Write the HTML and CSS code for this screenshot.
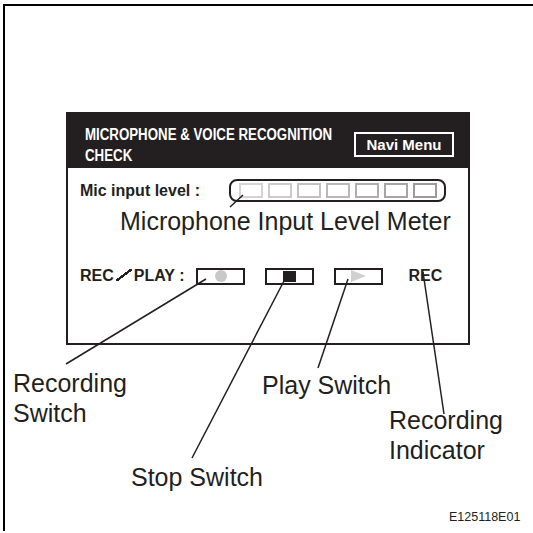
FILE: index.html
```
<!DOCTYPE html>
<html>
<head>
    <title>Microphone &amp; Voice Recognition Check</title>
    <link rel="stylesheet" href="styles.css">
</head>
<body>
    <div class="sheet">
        <div class="screen">
            <div class="screen-head">
                <div class="title">MICROPHONE &amp; VOICE RECOGNITION<br>CHECK</div>
                <div class="navi">Navi Menu</div>
            </div>

            <div class="mic-row">
                <span class="ui-label">Mic input level :</span>
                <div class="meter">
                    <span></span><span></span><span></span><span></span><span></span><span></span><span></span>
                </div>
            </div>
            <div class="meter-caption">Microphone Input Level Meter</div>

            <div class="rec-row">
                <span class="ui-label">REC<span class="slash"></span>PLAY :</span>
                <div class="switch first"><i class="dot"></i></div>
                <div class="switch"><i class="stop"></i></div>
                <div class="switch"><i class="play"></i></div>
                <span class="ui-label rec">REC</span>
            </div>
        </div>
    </div>

    <!-- callout labels -->
    <div class="callout rec-switch">Recording<br>Switch</div>
    <div class="callout play-switch">Play Switch</div>
    <div class="callout rec-indicator">Recording<br>Indicator</div>
    <div class="callout stop-switch">Stop Switch</div>
    <div class="fig-code">E125118E01</div>

    <!-- leader lines -->
    <svg class="leaders" width="533" height="533" viewBox="0 0 533 533">
        <line x1="243" y1="195" x2="230" y2="207"/>
        <line x1="206" y1="279" x2="66" y2="364"/>
        <line x1="285" y1="279" x2="192" y2="458"/>
        <line x1="348" y1="279" x2="318" y2="368"/>
        <line x1="423" y1="272" x2="444" y2="414"/>
    </svg>
</body>
</html>
```

FILE: styles.css
```
body {
    margin: 0;
    width: 533px;
    height: 533px;
    position: relative;
    overflow: hidden;
    background-color: #fff;
    color: #231f20;
    font-family: "Liberation Sans", Arial, sans-serif;
}

.sheet {
    margin: 4px 0 0 3px;
    height: 527px;
    border-left: 2px solid #000;
    border-top: 2px solid #000;
    padding: 106px 0 0 61px;
    box-sizing: border-box;
}

.screen {
    width: 404px;
    height: 233px;
    border: 2px solid #231f20;
    box-sizing: border-box;
}

.screen-head {
    height: 54px;
    background-color: #231f20;
    display: flex;
    justify-content: space-between;
    align-items: flex-start;
    padding: 10px 14px 0 17px;
    box-sizing: border-box;
}

/* condensed look: no narrow face installed, so squeeze it */
.title {
    width: 250px;
    color: #fff;
    font-weight: bold;
    font-size: 16px;
    line-height: 21px;
    white-space: nowrap;
    transform: scaleX(0.83);
    transform-origin: left top;
}

.navi {
    margin-top: 8px;
    width: 100px;
    height: 25px;
    border: 2px solid #fff;
    box-sizing: border-box;
    color: #fff;
    font-weight: bold;
    font-size: 15px;
    line-height: 21px;
    text-align: center;
}

.ui-label {
    font-weight: bold;
    font-size: 16px;
}

.mic-row {
    display: flex;
    align-items: center;
    margin-top: 11px;
    padding-left: 12px;
}

.meter {
    margin-left: 29px;
    width: 217px;
    height: 23px;
    border: 2px solid #231f20;
    border-radius: 8px;
    box-sizing: border-box;
    display: flex;
    align-items: center;
    gap: 5px;
    padding-left: 8px;
}

.meter span {
    width: 24px;
    height: 15px;
    border: 2px solid #d4d4d4;
    box-sizing: border-box;
}

.meter span:nth-child(2) { border-color: #cbcbcb; }
.meter span:nth-child(3) { border-color: #c2c2c2; }
.meter span:nth-child(4) { border-color: #b8b8b8; }
.meter span:nth-child(5) { border-color: #afafaf; }
.meter span:nth-child(6) { border-color: #a6a6a6; }
.meter span:nth-child(7) { border-color: #9c9c9c; }

.meter-caption {
    margin-top: 4px;
    padding-left: 52px;
    font-size: 25px;
    line-height: 30px;
}

.rec-row {
    display: flex;
    align-items: center;
    margin-top: 31px;
    padding-left: 12px;
}

.slash {
    display: inline-block;
    width: 16px;
    height: 12px;
    margin: 0 2px;
    background: linear-gradient(to bottom right, transparent 44%, #231f20 44%, #231f20 56%, transparent 56%);
}

.switch {
    width: 49px;
    height: 17px;
    margin-left: 20px;
    border: 2px solid #231f20;
    box-sizing: border-box;
    display: flex;
    align-items: center;
    justify-content: center;
}

.switch.first {
    margin-left: 12px;
}

.dot {
    width: 12px;
    height: 12px;
    border-radius: 50%;
    background-color: #c8c8c8;
}

.stop {
    width: 13px;
    height: 11px;
    background-color: #231f20;
}

.play {
    width: 0;
    height: 0;
    border-top: 6px solid transparent;
    border-bottom: 6px solid transparent;
    border-left: 15px solid #d0d0d0;
}

.ui-label.rec {
    margin-left: 25px;
}

.callout {
    position: absolute;
    font-size: 25px;
    line-height: 30px;
}

.rec-switch { left: 13px; top: 368px; }
.play-switch { left: 262px; top: 370px; }
.rec-indicator { left: 389px; top: 405px; }
.stop-switch { left: 131px; top: 462px; }

.fig-code {
    position: absolute;
    left: 449px;
    top: 510px;
    font-size: 12.5px;
}

.leaders {
    position: absolute;
    left: 0;
    top: 0;
    pointer-events: none;
}

.leaders line {
    stroke: #231f20;
    stroke-width: 1.5;
}
```
